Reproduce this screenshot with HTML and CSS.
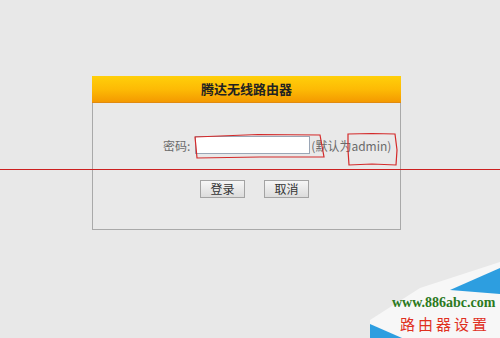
FILE: index.html
```html
<!DOCTYPE html>
<html lang="zh-CN">
<head>
<meta charset="utf-8">
<title>腾达无线路由器</title>
<link rel="stylesheet" href="styles.css">
</head>
<body>
<div class="page">
  <div class="panel">
    <div class="panel-head">腾达无线路由器</div>
    <div class="panel-body">
      <div class="pw-row">
        <span class="label">密码:</span>
        <input class="pw-input" type="password">
        <span class="hint">(默认为admin)</span>
      </div>
      <div class="btn-row">
        <button class="btn">登录</button>
        <button class="btn">取消</button>
      </div>
    </div>
  </div>
</div>

<svg class="marks" width="500" height="338" viewBox="0 0 500 338">
  <line x1="0" y1="169.5" x2="500" y2="169.5" stroke="#cc2020" stroke-width="1.2"/>
  <path d="M195 137 L258 134.5 L320 135 L322 146 L324 157 L260 157 L197 158 L196 147 Z" fill="none" stroke="#d42a2a" stroke-width="1.2"/>
  <path d="M348 134 L372 133.5 L395 134 L397 150 L396 165 L372 164 L349 165 L348 150 Z" fill="none" stroke="#d42a2a" stroke-width="1.2"/>
</svg>

<div class="wm">
  <svg class="wm-bg" width="130" height="78" viewBox="0 0 130 78">
    <polygon points="50,28 130,2 130,78 0,78 0,60" fill="#f7f7f7"/>
    <polygon points="80,30 130,8 130,34" fill="#2d9ee0"/>
    <polygon points="0,64 0,78 32,78" fill="#2d9ee0"/>
  </svg>
  <div class="wm-url">www.886abc.com</div>
  <div class="wm-cn">路由器设置</div>
</div>
</body>
</html>
```

FILE: styles.css
```css
html, body {
  margin: 0;
  padding: 0;
}
body {
  width: 500px;
  height: 338px;
  background: #e8e8e8;
  font-family: "Noto Sans CJK SC", "Noto Sans", sans-serif;
  position: relative;
  overflow: hidden;
}
.page {
  padding: 76px 0 0 92px;
}
.panel {
  width: 309px;
  box-sizing: border-box;
  border: 1px solid #a9a9a9;
  background: #e9e9e9;
}
.panel-head {
  height: 26px;
  line-height: 26px;
  text-align: center;
  font-size: 13px;
  font-weight: bold;
  color: #222;
  background: linear-gradient(#ffcf0a 0%, #fdbb05 50%, #f49a00 100%);
  border-bottom: 1px solid #e08a10;
  margin: -1px -1px 0 -1px;
}
.panel-body {
  height: 126px;
  box-sizing: border-box;
  padding-top: 33px;
}
.pw-row {
  display: flex;
  align-items: center;
  padding-left: 70px;
  height: 18px;
  font-size: 12px;
  color: #6b6b6b;
}
.label {
  margin-right: 5px;
}
.pw-input {
  width: 115px;
  height: 18px;
  box-sizing: border-box;
  border: 1px solid #9aa6b6;
  background: #fff;
  padding: 0;
  margin: 0 1px 0 0;
}
.hint {
  white-space: nowrap;
}
.btn-row {
  display: flex;
  gap: 19px;
  padding-left: 107px;
  margin-top: 26px;
}
.btn {
  width: 45px;
  height: 18px;
  padding: 0;
  border: 1px solid #a3a3a3;
  background: linear-gradient(#f6f6f6, #dcdcdc);
  font-family: "Noto Sans CJK SC", sans-serif;
  font-size: 12px;
  line-height: 16px;
  color: #333;
}
.marks {
  position: absolute;
  left: 0;
  top: 0;
  pointer-events: none;
}
.wm {
  position: absolute;
  left: 370px;
  top: 260px;
  width: 130px;
  height: 78px;
}
.wm-bg {
  position: absolute;
  left: 0;
  top: 0;
}
.wm-url {
  position: absolute;
  left: 22px;
  top: 35px;
  font-family: "Liberation Serif", serif;
  font-weight: bold;
  font-size: 14px;
  color: #2c7a1e;
  white-space: nowrap;
}
.wm-cn {
  position: absolute;
  left: 30px;
  top: 53px;
  font-family: "Noto Sans CJK SC", sans-serif;
  font-size: 15px;
  letter-spacing: 3px;
  color: #e0301e;
  white-space: nowrap;
}
```
